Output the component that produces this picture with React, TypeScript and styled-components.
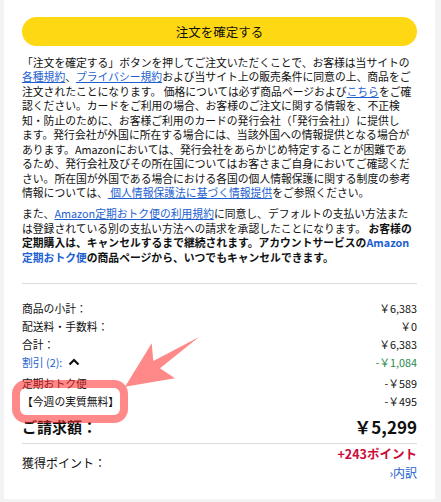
import React from 'react';
import styled, { createGlobalStyle } from 'styled-components';

const GlobalStyle = createGlobalStyle`
    html, body {
        margin: 0;
        padding: 0;
        background: #f3f3f3;
    }
    body {
        font-family: "Noto Sans CJK JP", "Noto Sans", "Liberation Sans", sans-serif;
        color: #0f1111;
    }
`;

const Page = styled.div`
    position: relative;
    width: 441px;
    height: 502px;
    padding: 0 6px 3px 4px;
    box-sizing: border-box;
`;

const Card = styled.div`
    background: #ffffff;
    height: 499px;
    padding: 17px 18px 0;
    box-sizing: border-box;
    display: flex;
    flex-direction: column;
`;

const PlaceOrderButton = styled.button`
    height: 29px;
    width: 100%;
    border: none;
    border-radius: 15px;
    background: #ffd814;
    color: #0f1111;
    font-family: inherit;
    font-size: 12.5px;
    padding: 0;
    cursor: pointer;
`;

const Legal = styled.p<{ $top: number; $lh: number }>`
    margin: ${(p) => p.$top}px 0 0;
    font-size: 10.8px;
    line-height: ${(p) => p.$lh}px;
    white-space: nowrap;
    color: #111;
`;

const Link = styled.a`
    color: #1d5fd1;
    text-decoration: underline;
`;

const Strong = styled.b<{ $blue?: boolean }>`
    font-weight: 700;
    color: ${(p) => (p.$blue ? '#1d5fd1' : '#0f1111')};
`;

const Divider = styled.hr<{ $top: number; $bottom: number }>`
    border: none;
    border-top: 1px solid #dcdcdc;
    margin: ${(p) => p.$top}px 0 ${(p) => p.$bottom}px;
`;

const Row = styled.div<{ $h?: number; $top?: number }>`
    display: flex;
    justify-content: space-between;
    align-items: center;
    height: ${(p) => p.$h ?? 18.2}px;
    margin-top: ${(p) => p.$top ?? 0}px;
    font-size: 10.8px;
`;

const Label = styled.span<{ $color?: string }>`
    color: ${(p) => p.$color ?? '#111'};
    display: flex;
    align-items: center;
    gap: 6px;
`;

const Amount = styled.span<{ $color?: string }>`
    color: ${(p) => p.$color ?? '#111'};
`;

const TotalRow = styled.div`
    display: flex;
    justify-content: space-between;
    align-items: center;
    height: 24px;
    margin-top: 3.9px;
    font-weight: 700;
`;

const TotalLabel = styled.span`
    font-size: 15px;
`;

const TotalAmount = styled.span`
    font-size: 17px;
`;

const PointsRow = styled.div`
    display: flex;
    justify-content: space-between;
    align-items: center;
`;

const PointsLabel = styled.span`
    font-size: 12px;
`;

const PointsDetail = styled.div`
    display: flex;
    flex-direction: column;
    align-items: flex-end;
    line-height: 19.4px;
`;

const PointsValue = styled.span`
    color: #cc0c39;
    font-weight: 700;
    font-size: 12.5px;
`;

const Breakdown = styled.a`
    color: #1d5fd1;
    font-size: 12px;
    text-decoration: none;
`;

const Overlay = styled.svg`
    position: absolute;
    left: 0;
    top: 0;
    pointer-events: none;
`;

const ChevronUp = () => (
    <svg width="12" height="8" viewBox="0 0 12 8">
        <path d="M1.5 6.5 L6 2 L10.5 6.5" fill="none" stroke="#111" strokeWidth="2.2" />
    </svg>
);

const App = (): JSX.Element => {
    return (
        <>
            <GlobalStyle />
            <Page>
                <Card>
                    <PlaceOrderButton>注文を確定する</PlaceOrderButton>
                    <Legal $top={8.5} $lh={14.5}>
                        「注文を確定する」ボタンを押してご注文いただくことで、お客様は当サイトの
                        <br />
                        <Link>各種規約</Link>、<Link>プライバシー規約</Link>および当サイト上の販売条件に同意の上、商品をご
                        <br />
                        注文されたことになります。 価格については必ず商品ページおよび<Link>こちら</Link>をご確
                        <br />
                        認ください。カードをご利用の場合、お客様のご注文に関する情報を、不正検
                        <br />
                        知・防止のために、お客様ご利用のカードの発行会社（「発行会社」）に提供し
                        <br />
                        ます。発行会社が外国に所在する場合には、当該外国への情報提供となる場合が
                        <br />
                        あります。Amazonにおいては、発行会社をあらかじめ特定することが困難であ
                        <br />
                        るため、発行会社及びその所在国についてはお客さまご自身においてご確認くだ
                        <br />
                        さい。所在国が外国である場合における各国の個人情報保護に関する制度の参考
                        <br />
                        情報については、<Link> 個人情報保護法に基づく情報提供</Link>をご参照ください。
                    </Legal>
                    <Legal $top={6.5} $lh={14.6}>
                        また、<Link>Amazon定期おトク便の利用規約</Link>に同意し、デフォルトの支払い方法また
                        <br />
                        は登録されている別の支払い方法への請求を承認したことになります。 <Strong>お客様の</Strong>
                        <br />
                        <Strong>
                            定期購入は、キャンセルするまで継続されます。アカウントサービスの<Strong $blue>Amazon</Strong>
                        </Strong>
                        <br />
                        <Strong>
                            <Strong $blue>定期おトク便</Strong>の商品ページから、いつでもキャンセルできます。
                        </Strong>
                    </Legal>
                    <Divider $top={18.5} $bottom={14.6} />
                    <Row>
                        <Label>商品の小計：</Label>
                        <Amount>￥6,383</Amount>
                    </Row>
                    <Row>
                        <Label>配送料・手数料：</Label>
                        <Amount>￥0</Amount>
                    </Row>
                    <Row>
                        <Label>合計：</Label>
                        <Amount>￥6,383</Amount>
                    </Row>
                    <Row>
                        <Label $color="#1d5fd1">
                            割引 (2):
                            <ChevronUp />
                        </Label>
                        <Amount $color="#1e8a4c">-￥1,084</Amount>
                    </Row>
                    <Row $top={2.8}>
                        <Label>定期おトク便</Label>
                        <Amount>-￥589</Amount>
                    </Row>
                    <Row>
                        <Label>【今週の実質無料】</Label>
                        <Amount>-￥495</Amount>
                    </Row>
                    <TotalRow>
                        <TotalLabel>ご請求額：</TotalLabel>
                        <TotalAmount>￥5,299</TotalAmount>
                    </TotalRow>
                    <Divider $top={4.3} $bottom={0} />
                    <PointsRow>
                        <PointsLabel>獲得ポイント：</PointsLabel>
                        <PointsDetail>
                            <PointsValue>+243ポイント</PointsValue>
                            <Breakdown>›内訳</Breakdown>
                        </PointsDetail>
                    </PointsRow>
                </Card>
                <Overlay width="441" height="502" viewBox="0 0 441 502">
                    <rect
                        x="16"
                        y="384"
                        width="108"
                        height="35"
                        rx="10"
                        fill="none"
                        stroke="rgba(255, 40, 40, 0.55)"
                        strokeWidth="8"
                    />
                    <polygon
                        points="199,337 153.3,361 151.7,343.3 125,386.7 175,378.3 160,368.3"
                        fill="rgba(255, 40, 40, 0.55)"
                    />
                </Overlay>
            </Page>
        </>
    );
};

export default App;
